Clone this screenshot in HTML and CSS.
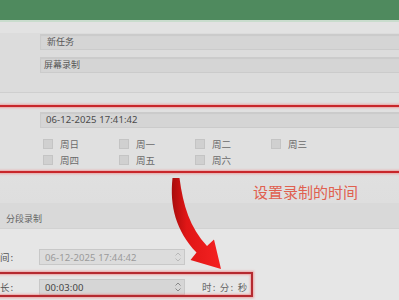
FILE: index.html
```html
<!DOCTYPE html>
<html lang="zh">
<head>
<meta charset="utf-8">
<link rel="stylesheet" href="styles.css">
</head>
<body>
<div class="page">
  <header class="topbar"></header>

  <section class="sec sec-name">
    <div class="row"><div class="field">新任务</div></div>
    <div class="row"><div class="field">屏幕录制</div></div>
  </section>

  <section class="sec sec-sched">
    <div class="row"><div class="field mono">06-12-2025 17:41:42</div></div>
    <div class="days">
      <label class="day"><span class="box"></span>周日</label>
      <label class="day"><span class="box"></span>周一</label>
      <label class="day"><span class="box"></span>周二</label>
      <label class="day"><span class="box"></span>周三</label>
      <label class="day"><span class="box"></span>周四</label>
      <label class="day"><span class="box"></span>周五</label>
      <label class="day"><span class="box"></span>周六</label>
    </div>
  </section>

  <section class="sec sec-split">
    <div class="split-label">分段录制</div>
  </section>

  <section class="sec sec-time">
    <div class="trow">
      <span class="tlabel">间:</span>
      <div class="spin disabled"><span class="mono">06-12-2025 17:44:42</span><span class="arrows"><svg width="8" height="12" viewBox="0 0 8 12"><path d="M1.5 4.5 L4 2 L6.5 4.5 M1.5 7.5 L4 10 L6.5 7.5" fill="none" stroke="#b8b8b8" stroke-width="1"/></svg></span></div>
    </div>
    <div class="trow">
      <span class="tlabel">长:</span>
      <div class="spin"><span class="mono">00:03:00</span><span class="arrows"><svg width="8" height="12" viewBox="0 0 8 12"><path d="M1.5 4.5 L4 2 L6.5 4.5 M1.5 7.5 L4 10 L6.5 7.5" fill="none" stroke="#888" stroke-width="1"/></svg></span></div>
      <span class="unit">时: 分: 秒</span>
    </div>
  </section>

  <div class="mark mark-sched"></div>
  <div class="mark mark-dur"></div>
  <div class="note">设置录制的时间</div>
  <svg class="arrow" width="399" height="300" viewBox="0 0 399 300">
    <defs>
      <linearGradient id="ag" x1="0" y1="0" x2="1" y2="0">
        <stop offset="0" stop-color="#a80d0d"/>
        <stop offset="0.3" stop-color="#e01616"/>
        <stop offset="1" stop-color="#f52222"/>
      </linearGradient>
    </defs>
    <path d="M172.5 178 C169.5 206 176 231 196.5 252.5 L190.5 260 L221 269 L214 239.5 L207 246 C190 228 183 205 179.5 178 Z" fill="url(#ag)"/>
  </svg>
</div>
</body>
</html>
```

FILE: styles.css
```css
* { box-sizing: border-box; margin: 0; padding: 0; }
html, body { width: 399px; height: 300px; overflow: hidden; }
body {
  background: #dedede;
  font-family: "Noto Sans CJK SC", "Noto Sans", sans-serif;
  color: #5a5a5a;
}
.page { position: relative; width: 399px; height: 300px; overflow: hidden; }

.topbar {
  height: 22px;
  background: #4f8a5e;
  border-bottom: 2px solid #c9dccd;
}

.sec { display: flex; flex-direction: column; }

.row { display: flex; padding-left: 40px; margin-right: -4px; }
.field {
  flex: 1;
  height: 16px;
  background: #d5d5d5;
  border: 1px solid #cbcbcb;
  box-shadow: inset 0 1px 1px rgba(0,0,0,0.05);
  font-size: 9px;
  line-height: 14px;
  padding-left: 6px;
  color: #555;
}
.mono { font-family: "Noto Sans", "Noto Sans CJK SC", sans-serif; font-size: 9.5px; letter-spacing: 0.1px; }

.sec-name {
  height: 71px;
  padding-top: 12px;
  gap: 7px;
  background: linear-gradient(#e2e2e2 0, #e2e2e2 11px, #dcdcdc 11px);
  border-bottom: 1px solid #cfcfcf;
}
.sec-name .row:nth-child(2) .field { padding-left: 3px; }

.sec-sched {
  height: 79px;
  padding-top: 19px;
  background: #e0e0e0;
}
.sec-sched .field { padding-left: 5px; color: #4a4a4a; }

.days {
  display: grid;
  grid-template-columns: repeat(4, 76px);
  row-gap: 5px;
  padding-left: 43px;
  margin-top: 10px;
}
.day {
  display: flex;
  align-items: center;
  gap: 7px;
  height: 11px;
  font-size: 9.5px;
  color: #6a6a6a;
}
.box {
  width: 10px;
  height: 10px;
  background: #d0d0d0;
  border: 1px solid #c4c4c4;
}

.sec-split {
  height: 57px;
  background: linear-gradient(#e0e0e0 0, #dedede 31px, #d9d9d9 31px);
  border-bottom: 1px solid #d2d2d2;
  justify-content: flex-end;
}
.split-label {
  font-size: 9px;
  padding-left: 6px;
  height: 18px;
  line-height: 18px;
  margin-bottom: 0;
  color: #666;
}

.sec-time {
  flex: 1;
  height: 71px;
  background: #e6e6e6;
  padding-top: 20px;
  gap: 14px;
}
.trow { display: flex; align-items: center; height: 16px; }
.tlabel { width: 39px; font-size: 9.5px; color: #555; letter-spacing: 1px; }
.spin {
  width: 146px;
  height: 16px;
  display: flex;
  align-items: center;
  justify-content: space-between;
  background: #d6d6d6;
  border: 1px solid #c8c8c8;
  padding: 0 2px 0 5px;
  color: #444;
}
.spin.disabled { background: #dcdcdc; color: #9a9a9a; }
.arrows { display: flex; }
.unit { margin-left: 17px; font-size: 9.5px; color: #666; letter-spacing: 1.2px; }

/* annotations over the screenshot */
.mark {
  position: absolute;
  border: 2px solid #c8262a;
  box-shadow: 0 0 2px 1px rgba(240,120,120,0.6), inset 0 0 2px 1px rgba(240,120,120,0.6);
}
.mark-sched { left: -6px; right: -6px; top: 105px; height: 68px; }
.mark-dur { left: -6px; width: 259px; top: 272px; height: 25px; border-color: #b52a30; }

.note {
  position: absolute;
  left: 253px;
  top: 182px;
  font-size: 15px;
  line-height: 20px;
  color: #e0604f;
  letter-spacing: 0;
}
.arrow { position: absolute; left: 0; top: 0; pointer-events: none; }
```
